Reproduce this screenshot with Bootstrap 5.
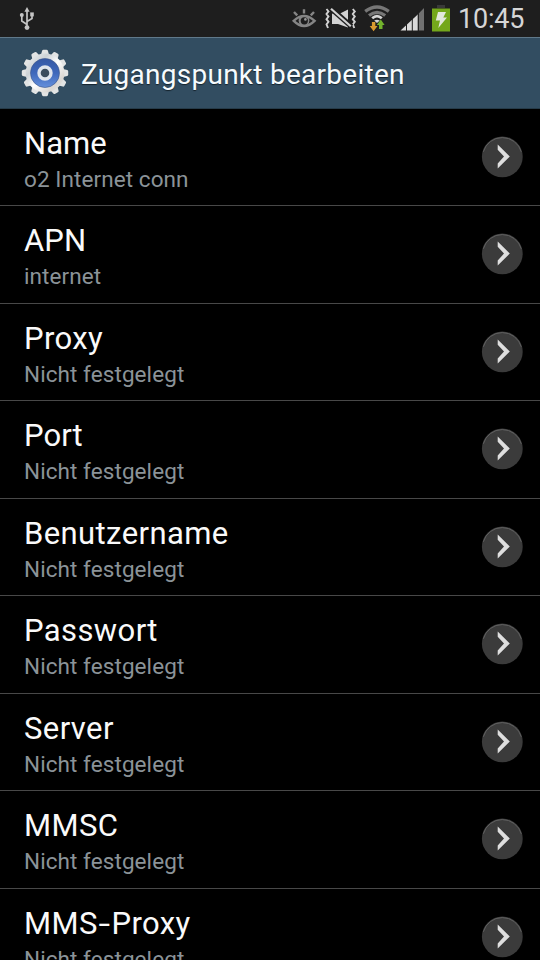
<!DOCTYPE html>
<html lang="de">
<head>
<meta charset="utf-8">
<meta name="viewport" content="width=device-width, initial-scale=1">
<title>Zugangspunkt bearbeiten</title>
<link href="https://cdn.jsdelivr.net/npm/bootstrap@5.3.0/dist/css/bootstrap.min.css" rel="stylesheet">
<style>
body{background:#000;font-family:Roboto,"Noto Sans",sans-serif;height:960px}
.screen{width:540px;height:960px}
.statusbar{height:37px;background:#1e1e1e;padding:0 16px 0 18px}
.clock{font-size:27px;line-height:37px;color:#d6d6d6;letter-spacing:-.2px;width:66px;padding-top:2px}
.titlebar{height:71.5px;background:#324d61;border-top:1px solid #60798a;border-bottom:1px solid #263b49;padding-left:20px}
.titlebar h1{font-size:28px;line-height:34px;color:#f6fbfe;font-weight:400;letter-spacing:.27px;text-shadow:0 1px 1px #15232d;margin-left:11px;padding-top:4px}
.entry{height:97.5px;padding:0 17px 0 24px;border:0;border-bottom:1px solid #484848;background:#000;border-radius:0}
.entry-name{font-size:31px;line-height:38px;color:#fafafa;letter-spacing:.4px}
.entry-name.tight{letter-spacing:.05px}
.wide-hyphen{display:inline-block;transform:scaleX(1.35);margin:0 2.4px}
.entry-value{font-size:22.5px;line-height:28px;color:#8b9398;margin-top:2px;letter-spacing:.08px}
.entry-text{padding-top:16px}
</style>
</head>
<body>
<svg class="d-none" xmlns="http://www.w3.org/2000/svg">
<symbol id="go" viewBox="0 0 42 42"><circle cx="21.3" cy="20.8" r="20.4" fill="#3b3b3b"/><path d="M2.3 15.8A19.8 19.8 0 0 1 40.3 15.8" fill="none" stroke="#606060" stroke-width="1"/><path d="M16.7 8.4L28.8 20.6 16.7 32.4V27.4L23 20.6 16.7 13.8Z" fill="#dedede"/></symbol>
</svg>
<main class="screen overflow-hidden">
<header class="statusbar d-flex align-items-center">
<svg width="18" height="37" viewBox="18 0 18 37" fill="none" stroke="#c4c4c4" stroke-width="1.7"><path d="M27 11V27M27 24.5L21.8 21V16M27 21.5L32 18.5V15"/><path d="M27 7L29.6 11.8H24.4Z" fill="#c4c4c4" stroke="none"/><circle cx="21.8" cy="15" r="2" fill="#c4c4c4" stroke="none"/><circle cx="27" cy="27.6" r="2.4" fill="#c4c4c4" stroke="none"/><path d="M30.2 12.4H33.8V16.4H30.2Z" fill="#c4c4c4" stroke="none"/></svg>
<svg class="ms-auto flex-shrink-0" width="168" height="37" viewBox="290 0 168 37">
<g fill="none" stroke="#858585" stroke-width="2.4"><path d="M293.7 20.8Q304 11.2 314.6 20.8Q304 31 293.7 20.8Z"/><path d="M294 12L297.2 15.4M304 9.2V13.6M314 12L310.8 15.4"/></g>
<circle cx="304" cy="20.6" r="5.4" fill="#858585"/><circle cx="304.3" cy="20.8" r="3.6" fill="#1e1e1e"/><circle cx="305.4" cy="19.4" r="1.3" fill="#999"/>
<g fill="none" stroke="#d2d2d2" stroke-width="1.9"><path d="M326.5 9L328.5 11.4 326.5 14 328.5 16.6 326.5 19.2 328.5 21.8 326.5 24.4 328 28M352.8 9L354.8 11.4 352.8 14 354.8 16.6 352.8 19.2 354.8 21.8 352.8 24.4 354.3 28"/></g>
<path d="M332 13.5V24H338L348 27.5V9.5L338 14.5Z" fill="#d2d2d2"/><path d="M330.5 8L351.5 26.5" stroke="#1e1e1e" stroke-width="5.2"/><path d="M331 8.8L350.8 26.3" stroke="#d2d2d2" stroke-width="2.2"/>
<g fill="none" stroke-width="3.2"><path d="M365.2 11.4Q377 2.6 388.8 11.4" stroke="#777"/><path d="M369 15.6Q377 9.2 385.2 15.6" stroke="#777"/><path d="M372.2 18.2Q377 14 381.8 18.2" stroke="#d5d5d5" stroke-width="2.8"/></g><path d="M374.2 20.6Q377 18.8 379.8 20.6L377 23Z" fill="#d5d5d5"/>
<path d="M371.9 22H375.3V26H377.5L373.6 31.2 369.7 26H371.9Z" fill="#d99a2f"/><path d="M379 29V25H376.8L380.8 19.6 384.6 25H382.5V29Z" fill="#72b32c"/>
<path d="M400.5 30.5L418 14.2V30.5Z" fill="#dadada"/><path d="M418.7 13.5L424 8V30.5H418.7Z" fill="#717171"/><g stroke="#1e1e1e" stroke-width="1"><path d="M406.5 22V31M412.3 17V31M418.2 11V31"/></g>
<path d="M437 5H445V8H437Z" fill="#393939"/><path d="M432 8.5H450V31.5H432Z" fill="#74a71b"/><path d="M438 12H446L443.3 17.5H447L438.3 28 440 20.5H435.8Z" fill="#e3e8dd"/>
</svg>
<time class="clock text-nowrap">10:45</time>
</header>
<div class="titlebar d-flex align-items-center">
<svg width="50" height="50" viewBox="-25 -25 50 50">
<defs><linearGradient id="metal" x1="0" y1="0" x2="1" y2="1"><stop stop-color="#f4f4f4"/><stop offset=".3" stop-color="#cdd2d6"/><stop offset=".52" stop-color="#fff"/><stop offset=".78" stop-color="#dad7d3"/><stop offset="1" stop-color="#f1efec"/></linearGradient><linearGradient id="blue" x1="0" y1="0" x2="0" y2="1"><stop stop-color="#3558a4"/><stop offset=".5" stop-color="#3f68bb"/><stop offset="1" stop-color="#6590dc"/></linearGradient></defs>
<g fill="#e3e4e4"><g id="teeth"><path id="tooth" d="M-4 -18L-2.9 -22.2Q-2.6 -23.2 -1.5 -23.2H1.5Q2.6 -23.2 2.9 -22.2L4 -18V18L2.9 22.2Q2.6 23.2 1.5 23.2H-1.5Q-2.6 23.2 -2.9 22.2L-4 18Z"/><use href="#tooth" transform="rotate(30)"/><use href="#tooth" transform="rotate(60)"/></g><use href="#teeth" transform="rotate(90)"/></g>
<circle r="19.4" fill="url(#metal)"/><circle r="14.5" fill="url(#blue)" stroke="#3c5588" stroke-width=".6"/><circle r="6" fill="#3a4b5c" stroke="#dfe4ec" stroke-width="3.4"/>
</svg>
<h1 class="mb-0 text-nowrap">Zugangspunkt bearbeiten</h1>
</div>
<div class="list-group list-group-flush">
<div class="entry list-group-item d-flex justify-content-between align-items-center"><div class="entry-text align-self-start"><div class="entry-name tight">Name</div><div class="entry-value">o2 Internet conn</div></div><svg width="42" height="42"><use href="#go"/></svg></div>
<div class="entry list-group-item d-flex justify-content-between align-items-center"><div class="entry-text align-self-start"><div class="entry-name tight">APN</div><div class="entry-value">internet</div></div><svg width="42" height="42"><use href="#go"/></svg></div>
<div class="entry list-group-item d-flex justify-content-between align-items-center"><div class="entry-text align-self-start"><div class="entry-name">Proxy</div><div class="entry-value">Nicht festgelegt</div></div><svg width="42" height="42"><use href="#go"/></svg></div>
<div class="entry list-group-item d-flex justify-content-between align-items-center"><div class="entry-text align-self-start"><div class="entry-name tight">Port</div><div class="entry-value">Nicht festgelegt</div></div><svg width="42" height="42"><use href="#go"/></svg></div>
<div class="entry list-group-item d-flex justify-content-between align-items-center"><div class="entry-text align-self-start"><div class="entry-name">Benutzername</div><div class="entry-value">Nicht festgelegt</div></div><svg width="42" height="42"><use href="#go"/></svg></div>
<div class="entry list-group-item d-flex justify-content-between align-items-center"><div class="entry-text align-self-start"><div class="entry-name">Passwort</div><div class="entry-value">Nicht festgelegt</div></div><svg width="42" height="42"><use href="#go"/></svg></div>
<div class="entry list-group-item d-flex justify-content-between align-items-center"><div class="entry-text align-self-start"><div class="entry-name">Server</div><div class="entry-value">Nicht festgelegt</div></div><svg width="42" height="42"><use href="#go"/></svg></div>
<div class="entry list-group-item d-flex justify-content-between align-items-center"><div class="entry-text align-self-start"><div class="entry-name">MMSC</div><div class="entry-value">Nicht festgelegt</div></div><svg width="42" height="42"><use href="#go"/></svg></div>
<div class="entry list-group-item d-flex justify-content-between align-items-center"><div class="entry-text align-self-start"><div class="entry-name">MMS<span class="wide-hyphen">-</span>Proxy</div><div class="entry-value">Nicht festgelegt</div></div><svg width="42" height="42"><use href="#go"/></svg></div>
</div>
</main>
<script src="https://cdn.jsdelivr.net/npm/bootstrap@5.3.0/dist/js/bootstrap.bundle.min.js"></script>
</body>
</html>
